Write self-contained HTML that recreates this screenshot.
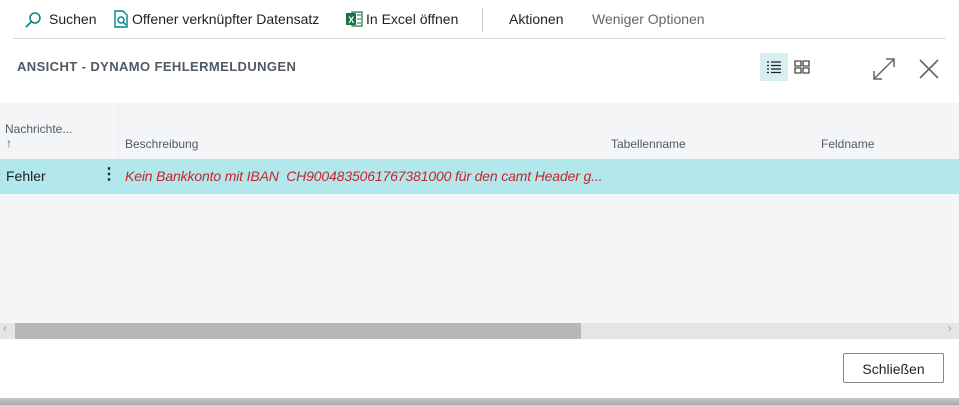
<!DOCTYPE html>
<html><head><style>
body{margin:0;width:959px;height:405px;background:#fff;font-family:"Segoe UI","Liberation Sans",sans-serif;position:relative;overflow:hidden;color:#212121}
.a{position:absolute;white-space:nowrap}
.tb{font-size:14px;top:11px;color:#212121}
</style></head><body>
<svg class="a" style="left:24px;top:11px" width="18" height="18" viewBox="0 0 18 18"><circle cx="11" cy="7" r="5" fill="none" stroke="#00838a" stroke-width="1.5"/><path d="M7.5 10.5L2 16" stroke="#00838a" stroke-width="1.6"/></svg>
<div class="a tb" style="left:49px">Suchen</div>
<svg class="a" style="left:113px;top:10px" width="16" height="18" viewBox="0 0 16 18"><path d="M2 1h8l4 4v12H2z" fill="none" stroke="#00838a" stroke-width="1.4"/><circle cx="8" cy="10" r="3" fill="none" stroke="#00838a" stroke-width="1.4"/><path d="M10 12l3 3" stroke="#00838a" stroke-width="1.5"/></svg>
<div class="a tb" style="left:132px">Offener verknüpfter Datensatz</div>
<svg class="a" style="left:346px;top:11px" width="17" height="16" viewBox="0 0 17 16"><rect x="6" y="1" width="10" height="14" fill="#fff" stroke="#1e7145" stroke-width="1.2"/><path d="M11 4h4M11 8h4M11 12h4" stroke="#1e7145"/><rect x="0" y="2" width="10" height="12" fill="#1e7145"/><text x="2.3" y="12" font-size="9" font-weight="bold" fill="#fff" font-family="Liberation Sans">X</text></svg>
<div class="a tb" style="left:366px">In Excel öffnen</div>
<div class="a" style="left:482px;top:8px;width:1px;height:24px;background:#ccc"></div>
<div class="a tb" style="left:509px">Aktionen</div>
<div class="a tb" style="left:592px;color:#666">Weniger Optionen</div>
<div class="a" style="left:13px;top:38px;width:933px;height:1px;background:#d8d8de"></div>
<div class="a" style="left:17px;top:59px;font-size:13px;font-weight:bold;color:#505a64;letter-spacing:0.4px">ANSICHT - DYNAMO FEHLERMELDUNGEN</div>
<div class="a" style="left:760px;top:53px;width:28px;height:28px;background:#d8eff1"></div>
<svg class="a" style="left:766px;top:60px" width="16" height="14" viewBox="0 0 16 14"><path d="M1 2h2M5 2h10M1 5.5h2M5 5.5h10M1 9h2M5 9h10M1 12.5h2M5 12.5h10" stroke="#222" stroke-width="1.2"/></svg>
<svg class="a" style="left:794px;top:60px" width="16" height="14" viewBox="0 0 16 14"><path d="M1 1h6v5H1zM9 1h6v5H9zM1 8h6v5H1zM9 8h6v5H9z" fill="none" stroke="#222" stroke-width="1.1"/></svg>
<svg class="a" style="left:872px;top:57px" width="24" height="24" viewBox="0 0 24 24"><path d="M2 22L22 2M14 2h8v8M2 14v8h8" fill="none" stroke="#666" stroke-width="1.5"/></svg>
<svg class="a" style="left:919px;top:59px" width="20" height="20" viewBox="0 0 20 20"><path d="M1 1L19 19M19 1L1 19" stroke="#666" stroke-width="1.6"/></svg>
<div class="a" style="left:0;top:103px;width:959px;height:220px;background:#f4f5f7"></div>
<div class="a" style="left:118px;top:103px;width:1px;height:57px;background:#eceef1"></div>
<div class="a" style="left:5px;top:122px;font-size:12px;color:#505a64">Nachrichte...</div>
<div class="a" style="left:6px;top:136px;font-size:12px;color:#505a64">↑</div>
<div class="a" style="left:125px;top:137px;font-size:12px;color:#505a64">Beschreibung</div>
<div class="a" style="left:611px;top:137px;font-size:12px;color:#505a64">Tabellenname</div>
<div class="a" style="left:821px;top:137px;font-size:12px;color:#505a64">Feldname</div>
<div class="a" style="left:0;top:159px;width:959px;height:1px;background:#d8d8d8"></div>
<div class="a" style="left:0;top:160px;width:959px;height:33px;background:#b2e7eb"></div>
<div class="a" style="left:0;top:193px;width:959px;height:1px;background:#d8d8d8"></div>
<div class="a" style="left:6px;top:168px;font-size:14px">Fehler</div>
<div class="a" style="left:101px;top:166px;font-size:16px;font-weight:bold;line-height:18px">⋮</div>
<div class="a" style="left:125px;top:168px;font-size:14px;font-style:italic;color:#c4262e;letter-spacing:-0.15px">Kein Bankkonto mit IBAN&nbsp; CH9004835061767381000 für den camt Header g...</div>
<div class="a" style="left:0;top:323px;width:959px;height:16px;background:#e5e5e5"></div>
<div class="a" style="left:15px;top:323px;width:566px;height:16px;background:#b7b7b7"></div>
<div class="a" style="left:3px;top:323px;font-size:11px;color:#999">‹</div>
<div class="a" style="left:948px;top:323px;font-size:11px;color:#999">›</div>
<div class="a" style="left:843px;top:353px;width:101px;height:30px;border:1px solid #8a8a8a;border-radius:2px;font-size:14px;text-align:center;line-height:30px;box-sizing:border-box">Schließen</div>
<div class="a" style="left:0;top:398px;width:959px;height:7px;background:linear-gradient(#c8c8c8,#a8a8a8)"></div>
</body></html>
